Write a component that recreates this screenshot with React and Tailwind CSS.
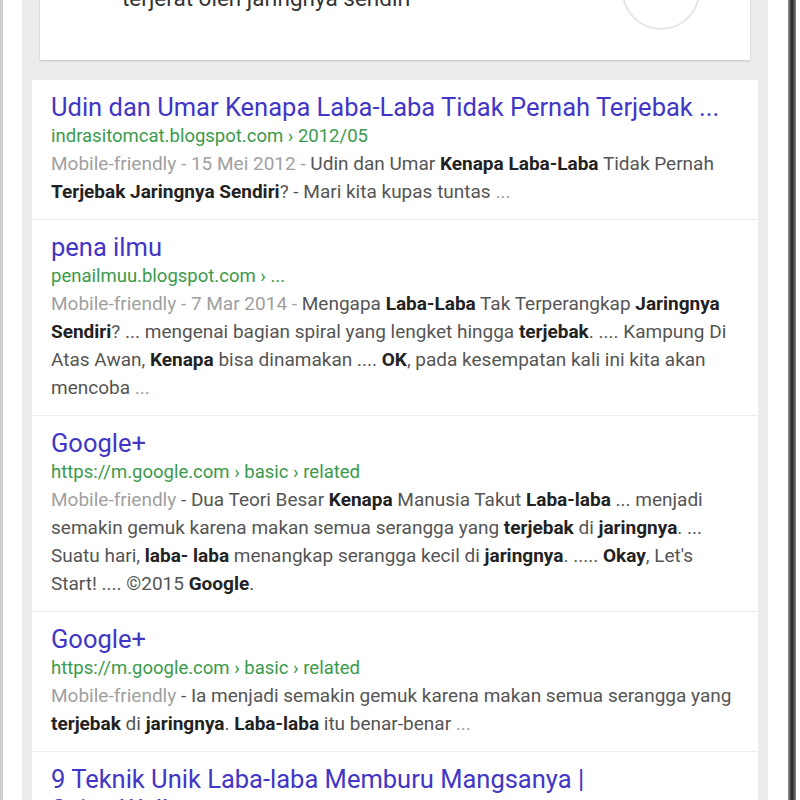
const font = { fontFamily: "Roboto, 'Noto Sans', sans-serif" };

const results = [
  {
    title: ["Udin dan Umar Kenapa Laba-Laba Tidak Pernah Terjebak ..."],
    url: "indrasitomcat.blogspot.com › 2012/05",
    lines: [
      [["g", "Mobile-friendly - 15 Mei 2012 - "], ["n", "Udin dan Umar "], ["b", "Kenapa Laba-Laba"], ["n", " Tidak Pernah"]],
      [["b", "Terjebak Jaringnya Sendiri"], ["n", "? - Mari kita kupas tuntas "], ["g", "..."]],
    ],
  },
  {
    title: ["pena ilmu"],
    url: "penailmuu.blogspot.com › ...",
    lines: [
      [["g", "Mobile-friendly - 7 Mar 2014 - "], ["n", "Mengapa "], ["b", "Laba-Laba"], ["n", " Tak Terperangkap "], ["b", "Jaringnya"]],
      [["b", "Sendiri"], ["n", "? ... mengenai bagian spiral yang lengket hingga "], ["b", "terjebak"], ["n", ". .... Kampung Di"]],
      [["n", "Atas Awan, "], ["b", "Kenapa"], ["n", " bisa dinamakan .... "], ["b", "OK"], ["n", ", pada kesempatan kali ini kita akan"]],
      [["n", "mencoba "], ["g", "..."]],
    ],
  },
  {
    title: ["Google+"],
    url: "https://m.google.com › basic › related",
    lines: [
      [["g", "Mobile-friendly"], ["n", " - Dua Teori Besar "], ["b", "Kenapa"], ["n", " Manusia Takut "], ["b", "Laba-laba"], ["n", " ... menjadi"]],
      [["n", "semakin gemuk karena makan semua serangga yang "], ["b", "terjebak"], ["n", " di "], ["b", "jaringnya"], ["n", ". ..."]],
      [["n", "Suatu hari, "], ["b", "laba- laba"], ["n", " menangkap serangga kecil di "], ["b", "jaringnya"], ["n", ". ..... "], ["b", "Okay"], ["n", ", Let's"]],
      [["n", "Start! .... ©2015 "], ["b", "Google"], ["n", "."]],
    ],
  },
  {
    title: ["Google+"],
    url: "https://m.google.com › basic › related",
    lines: [
      [["g", "Mobile-friendly"], ["n", " - Ia menjadi semakin gemuk karena makan semua serangga yang"]],
      [["b", "terjebak"], ["n", " di "], ["b", "jaringnya"], ["n", ". "], ["b", "Laba-laba"], ["n", " itu benar-benar "], ["g", "..."]],
    ],
  },
  {
    title: ["9 Teknik Unik Laba-laba Memburu Mangsanya |", "Sains Wallpaper"],
    url: "",
    lines: [],
  },
];

const tone = {
  g: "text-[#a0a0a0]",
  n: "text-[#555555]",
  b: "text-[#222222] font-bold",
};

function Result({ item, last }) {
  return (
    <div className={`pl-[19px] pt-[12px] pb-[13px] ${last ? "" : "border-b border-[#ececec]"}`}>
      {item.title.map((t, i) => (
        <div key={i} className="text-[25.5px] leading-[30px] text-[#4136c6] whitespace-nowrap">
          {t}
        </div>
      ))}
      {item.url && (
        <div className="text-[18.5px] leading-[28px] text-[#3a9a4c] whitespace-nowrap">{item.url}</div>
      )}
      {item.lines.map((line, i) => (
        <div key={i} className="text-[19px] leading-[28px] whitespace-nowrap">
          {line.map(([k, s], j) => (
            <span key={j} className={tone[k]}>
              {s}
            </span>
          ))}
        </div>
      ))}
    </div>
  );
}

export default function App() {
  return (
    <div className="w-[800px] h-[800px] overflow-hidden flex bg-white" style={font}>
      <div className="w-[3px] bg-[#cfcfcf]" />
      <div className="w-[19px] bg-white" />
      <div className="w-[746px] bg-[#ececec] flex flex-col overflow-hidden">
        <div className="shrink-0 mx-[18px] mt-[-60px] h-[120px] bg-white shadow-[0_1px_2px_rgba(0,0,0,0.18)] flex justify-between">
          <div className="pl-[82px] pt-[46px] text-[22.5px] leading-[24px] text-[#333333] whitespace-nowrap">
            terjerat oleh jaringnya sendiri
          </div>
          <div className="mr-[50px] mt-[12px] w-[78px] h-[78px] rounded-full border-2 border-[#e6e6e6] flex items-end justify-center pb-[28px]">
            <div className="w-[2px] h-[8px] bg-[#c8c8c8]" />
          </div>
        </div>
        <div className="shrink-0 mt-[20px] mx-[10px] bg-white">
          {results.map((r, i) => (
            <Result key={i} item={r} last={i === results.length - 1} />
          ))}
        </div>
      </div>
      <div className="w-[20px] bg-white" />
      <div className="w-[8px] bg-gradient-to-r from-[#9a9a9a] via-[#222222] to-[#8a8a8a]" />
      <div className="w-[4px] bg-white" />
    </div>
  );
}
